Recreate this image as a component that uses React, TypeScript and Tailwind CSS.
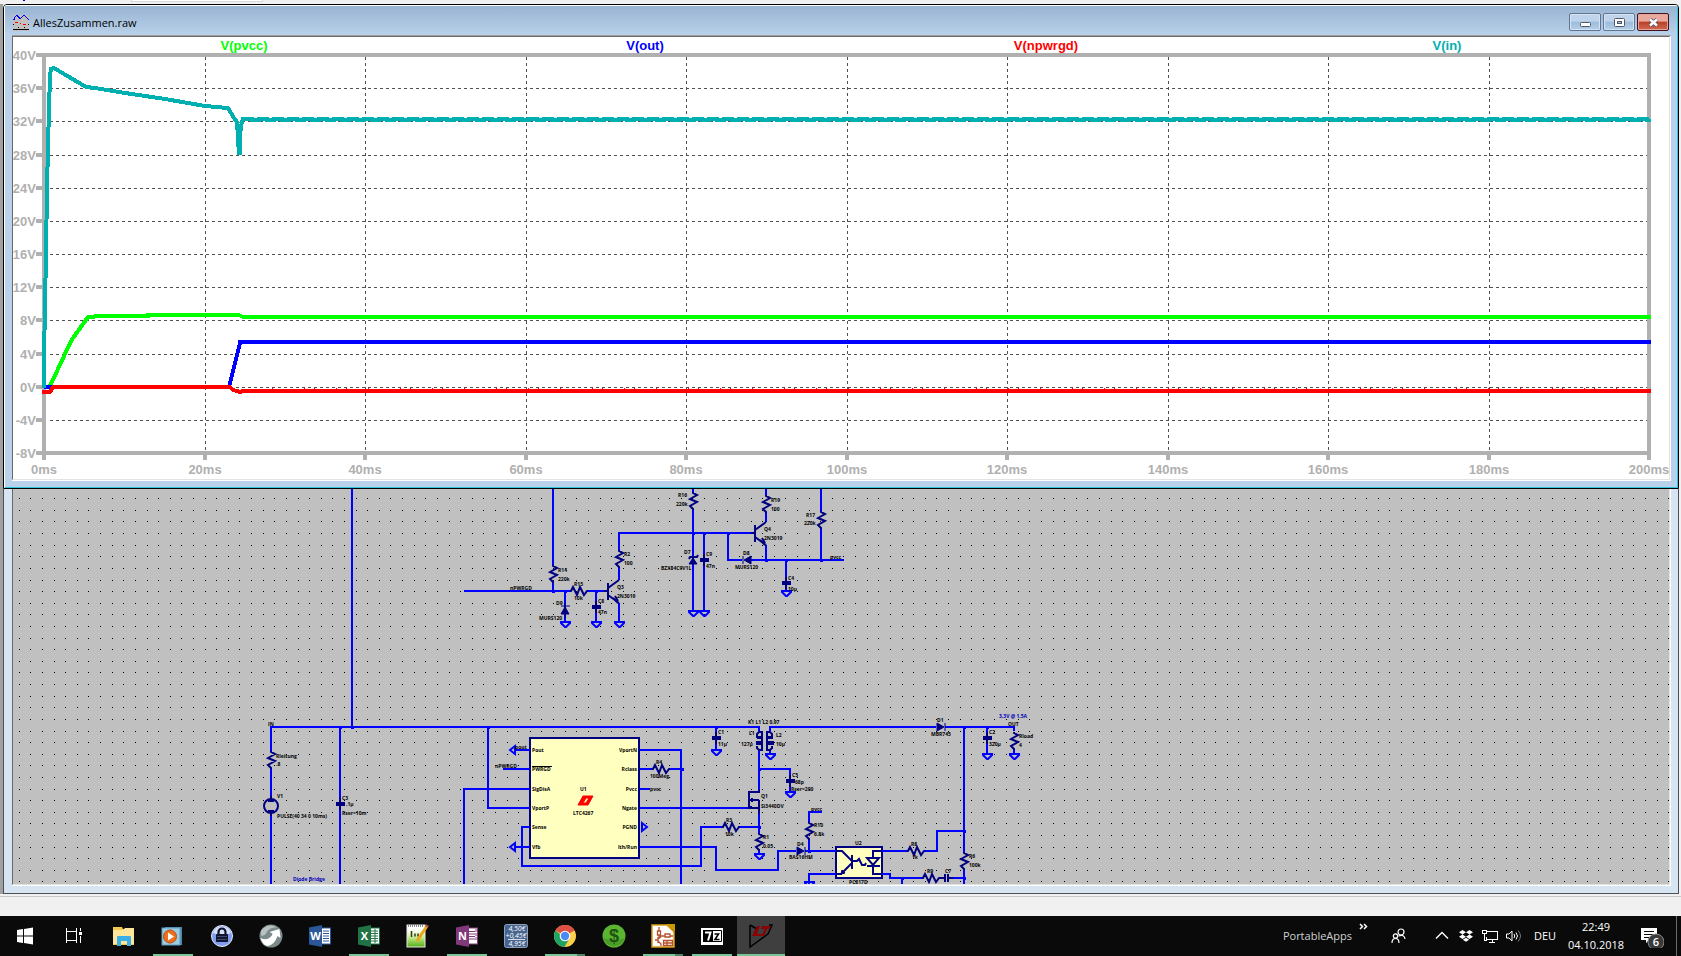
import React from "react";

type Pt = [number, number];

/* ---------- Waveform chart ---------- */

const VOLTS = [40, 36, 32, 28, 24, 20, 16, 12, 8, 4, 0, -4, -8];
const VOLT_Y = [55, 88, 121, 155, 188, 221, 254, 287, 320, 354, 387, 420, 453];
const TIMES = [0, 20, 40, 60, 80, 100, 120, 140, 160, 180, 200];
const TIME_X = [44, 205, 365, 526, 686, 847, 1007, 1168, 1328, 1489, 1649];

const TRACES = [
  { name: "V(pvcc)", x: 244, color: "#00ff00" },
  { name: "V(out)", x: 645, color: "#0000ff" },
  { name: "V(npwrgd)", x: 1046, color: "#ff0000" },
  { name: "V(in)", x: 1447, color: "#00b0b0" },
];

function ripple() {
  let d = "M241 124L243 119";
  for (let x = 244; x < 1649; x += 15) {
    d += `H${Math.min(x + 8, 1649)}V120H${Math.min(x + 15, 1649)}V119`;
  }
  return d;
}

function redTicks() {
  let d = "";
  for (let x = 272; x < 1645; x += 32) {
    d += `M${x} 388h1v2h-1z`;
    if (x % 3 !== 2) d += `M${x + 10} 388h1v2h-1z`;
  }
  return d;
}

function Chart() {
  return (
    <svg
      className="block h-[442px] w-full bg-white"
      viewBox="13 37 1656 442"
      preserveAspectRatio="xMinYMin meet"
      role="img"
      aria-label="Waveforms"
    >
      <g stroke="#505050" strokeWidth="1" strokeDasharray="3 3" shapeRendering="crispEdges">
        {VOLT_Y.slice(1, -1).map((y) => (
          <path key={y} d={`M50 ${y}.5H1647`} />
        ))}
        {TIME_X.slice(1, -1).map((x) => (
          <path key={x} d={`M${x}.5 57V451`} />
        ))}
      </g>
      <g stroke="#b0b0b0" strokeWidth="4" fill="none" shapeRendering="crispEdges">
        <path d="M44 53V460M36 453H1649M44 55H1651M1649 55V460" />
        {VOLT_Y.map((y) => (
          <path key={y} d={`M36 ${y}H44`} />
        ))}
        {TIME_X.map((x) => (
          <path key={x} d={`M${x} 453V460`} />
        ))}
      </g>
      <g fill="#b0b0b0" fontFamily="Liberation Sans, Arial, sans-serif" fontSize="13" fontWeight="700">
        {VOLTS.map((v, i) => (
          <text key={v} x="36" y={VOLT_Y[i] + 5} textAnchor="end">{`${v}V`}</text>
        ))}
        {TIMES.map((t, i) => (
          <text key={t} x={TIME_X[i]} y="474" textAnchor="middle">{`${t}ms`}</text>
        ))}
      </g>
      <g fontFamily="Liberation Sans, Arial, sans-serif" fontSize="13" fontWeight="700" textAnchor="middle">
        {TRACES.map((t) => (
          <text key={t.name} x={t.x} y="50" fill={t.color}>
            {t.name}
          </text>
        ))}
      </g>
      <g fill="none" strokeWidth="4" shapeRendering="crispEdges">
        <path stroke="#00ff00" d="M50 386L65 354L73 338L88 317H94L95 316H148V315H239L243 317H1651" />
        <path stroke="#0000ff" d="M44 387H54M229 387L240 343V342H1651" />
        <path stroke="#ff0000" d="M44 390V392H50L53 387H230L233 390L240 392L243 391H1651" />
        <path
          stroke="#00b0b0"
          d="M44 388V354L45 308L46 250L47 190L48 145L50 75L51 69L54 68L59 71L86 87L95 88L125 93L165 99L205 106L228 108L234 118L237 122L239 155"
        />
        <path stroke="#00b0b0" d="M240 155V135L242 120" />
        <path stroke="#00b0b0" d={ripple()} />
      </g>
      <path d={redTicks()} fill="#ff0000" shapeRendering="crispEdges" />
    </svg>
  );
}

/* ---------- Schematic ---------- */

const GRID = (() => {
  let d = "";
  for (let r = 0; r < 34; r++)
    for (let c = 0; c < 143; c++)
      d += `M${Math.floor(19.3 + c * 11.615)} ${Math.floor(498.7 + r * 11.615)}h1v1h-1z`;
  return d;
})();

const WIRES = [
  "M553 489V565M553 582V592M464 591H570M588 591H607M565 591V622M596 591V622",
  "M619 580V568M619 550V533H754M619 603V622",
  "M693 489V492M693 510V611M704 533V611M728 533V560H742M751 560H844",
  "M766 489V495M766 513V522M766 545V560M821 489V511M821 528V560M786 560V592",
  "M352 489V728M271 751V727H759V731M271 768V797M271 814V884M340 727V884",
  "M488 727V808H530M464 884V789H530M516 750H530M503 769H530",
  "M530 827H522V866H701V827H722M738 827H759M516 847H530",
  "M640 750H681V884M640 769H652M669 769H682M640 789H650M640 808H748",
  "M640 847H716V870H778V851H796M805 851H836M716 727V751",
  "M759 750V791M770 731V727H936M945 727H1014V731M770 750V755M759 769H790V793",
  "M759 808V833M759 850V855M822 812H809V822M809 839V851",
  "M882 851H907M925 851H937V831H964M882 874H890V878H922M902 878V884M953 878H964",
  "M836 874H809V884M964 727V852M964 870V884M987 727V755M1014 750V755",
].join("");

const JUNCTIONS: Pt[] = [
  [352, 727], [340, 727], [488, 727], [553, 591], [565, 591], [596, 591], [693, 533], [704, 533],
  [728, 533], [766, 560], [786, 560], [821, 560], [716, 727], [759, 769], [759, 827], [682, 769],
  [809, 851], [964, 727], [964, 831], [964, 878], [987, 727], [902, 878],
];

const RES_V: Pt[] = [
  [553, 565], [619, 550], [693, 492], [766, 495], [821, 511], [271, 751], [759, 833], [809, 822],
  [964, 852], [1014, 732],
];
const RES_H: Pt[] = [[570, 591], [652, 769], [722, 827], [907, 851], [922, 878]];
const CAPS: Pt[] = [
  [596, 607], [704, 560], [786, 583], [340, 804], [716, 738], [790, 781], [987, 738],
];
const GNDS: Pt[] = [
  [565, 623], [596, 623], [619, 623], [693, 612], [704, 612], [786, 592], [716, 751], [770, 755],
  [790, 793], [759, 855], [987, 755], [1014, 755], [809, 883],
];

const LABELS: [number, number, string][] = [
  [678, 497, "R16"], [676, 506, "220k"], [771, 502, "R19"], [771, 511, "100"], [806, 517, "R17"],
  [804, 525, "220k"], [764, 531, "Q4"], [764, 540, "2N3019"], [684, 554, "D7"],
  [661, 570, "BZX84C9V1L"], [706, 556, "C9"], [706, 568, "47n"], [743, 555, "D8"],
  [735, 569, "MURS120"], [830, 559, "pvcc"], [788, 580, "C4"], [788, 591, "10µ"], [624, 556, "R2"],
  [624, 565, "100"], [558, 572, "R14"], [558, 581, "220k"], [510, 590, "nPWRGD"], [574, 586, "R15"],
  [574, 600, "10k"], [617, 589, "Q3"], [617, 598, "2N3019"], [556, 605, "D9"], [539, 620, "MURS120"],
  [598, 603, "C8"], [598, 614, "47n"], [268, 726, "IN"], [276, 758, "Rleitung"], [276, 766, ".8"],
  [277, 798, "V1"], [277, 818, "PULSE(40 34 0 10ms)"], [342, 800, "C3"], [346, 806, ".1µ"],
  [342, 815, "Rser=10m"], [495, 768, "nPWRGD"], [515, 749, "pout"], [532, 752, "Pout"],
  [532, 771, "PWRGD"], [532, 791, "SigDisA"], [532, 810, "VportP"], [532, 829, "Sense"],
  [532, 849, "Vfb"], [580, 791, "U1"], [573, 815, "LTC4267"], [656, 764, "R4"],
  [650, 778, "100Meg."], [650, 791, "pvcc"], [718, 734, "C1"], [718, 746, "11µ"],
  [726, 822, "R3"], [725, 836, "10k"], [748, 724, "K1 L1 L2 0.97"], [749, 735, "L1"],
  [741, 746, "127µ"], [776, 737, "L2"], [776, 746, "10µ"], [792, 777, "C5"], [795, 784, "68p"],
  [791, 791, "Rser=200"], [761, 798, "Q1"], [761, 808, "Si3440DV"], [763, 839, "R1"],
  [763, 848, "0.05"], [811, 811, "pvcc"], [814, 827, "R10"], [814, 836, "6.8k"], [797, 846, "D4"],
  [789, 859, "BAS16HM"], [855, 845, "U2"], [849, 884, "PC817D"], [911, 846, "R8"], [912, 859, "1k"],
  [937, 722, "D1"], [931, 736, "MBR745"], [989, 734, "C2"], [989, 746, "320µ"], [1008, 726, "OUT"],
  [1019, 738, "Rload"], [1019, 747, "4"], [969, 858, "R6"], [969, 867, "100k"], [927, 873, "R9"],
  [945, 873, "C7"],
];
const LABELS_END: [number, number, string][] = [
  [637, 752, "VportN"], [637, 771, "Rclass"], [637, 791, "Pvcc"], [637, 810, "Ngate"],
  [637, 829, "PGND"], [637, 849, "Ith/Run"],
];

function Schematic() {
  return (
    <svg
      className="block h-full w-full bg-[#c0c0c0]"
      viewBox="13 489 1656 395"
      preserveAspectRatio="xMinYMin slice"
      role="img"
      aria-label="Schematic"
    >
      <path d={GRID} fill="#000" shapeRendering="crispEdges" />
      <rect x="530" y="738" width="109" height="120" fill="#ffffc0" stroke="#000080" strokeWidth="2" />
      <rect x="836" y="847" width="46" height="31" fill="#ffffc0" stroke="#000080" strokeWidth="2" />
      <g fill="none" stroke="#0000ff" strokeWidth="2" shapeRendering="crispEdges">
        <path d={WIRES} />
      </g>
      <g fill="#0000ff" shapeRendering="crispEdges">
        {JUNCTIONS.map(([x, y]) => (
          <rect key={`${x}-${y}`} x={x - 1} y={y - 1} width="3" height="3" />
        ))}
      </g>
      <g fill="none" stroke="#0000ff" strokeWidth="2">
        {GNDS.map(([x, y]) => (
          <path key={`${x}-${y}`} d={`M${x - 4} ${y - 1}h9v1l-4 4h-1l-4 -4z`} />
        ))}
        <path d="M515 746v8l-5 -4zM515 843v8l-5 -4zM642 823v8l5 -4z" />
      </g>
      <g fill="none" stroke="#000080" strokeWidth="2">
        {RES_V.map(([x, y]) => (
          <path key={`${x}-${y}`} d={`M${x} ${y}v1l4 2l-7 4l7 3l-7 4l3 3v1`} />
        ))}
        {RES_H.map(([x, y]) => (
          <path key={`${x}-${y}`} d={`M${x} ${y}h1l2 -4l4 8l3 -8l4 8l3 -4h1`} />
        ))}
        {CAPS.map(([x, y]) => (
          <path key={`${x}-${y}`} d={`M${x} ${y - 6}v12M${x - 4} ${y - 1}h9M${x - 4} ${y + 1}h9`} />
        ))}
        <path d="M940 878h6M945 874v8M948 874v8M948 878h5" />
        {/* transistors */}
        <path d="M607 591h-3M608 583v17M608 588L619 580M608 595L619 603M613 598l5 5M615 596l3 5" />
        <path d="M754 533h-3M755 525v17M755 530L766 522M755 537L766 545M760 540l5 5M762 538l3 5" />
        <path d="M759 790v2h-10v17M749 800h10M748 808h12M759 800v14M752 798v4M751 806v3" />
        {/* voltage source */}
        <circle cx="271" cy="806" r="7" />
        <path d="M271 796v6M268 801h6M268 811h6M271 811v5" />
        {/* transformer */}
        <path d="M762 731v20M767 731v20" />
        <path d="M762 732h-3l-2 2v3h5M757 738h5M762 744h-5v-2h5M762 750h-3l-2 -2v-2M767 732h3l2 2v3h-5M773 738h-6M767 744h6v-2h-6M767 750h3l2 -2v-2" />
        {/* optocoupler */}
        <path d="M836 851h6l10 10M852 855v14M852 863l-9 9M836 874h6M853 861h4l2 -2l3 6l3 0l1 -2M882 851h-9v7M873 866v8h9M867 858h12l-6 7zM867 866h13" />
      </g>
      <g fill="#000080" stroke="#000080">
        <path d="M561 606h9M561 614h8l-4 -7zM565 602v16" />
        <path d="M689 559l1 -2h7l1 -2" fill="none" strokeWidth="2" />
        <path d="M689 564h8l-4 -6z" />
        <path d="M743 556v8M751 556v8l-7 -4z" />
        <path d="M797 847v8l7 -4zM805 847v8" />
        <path d="M937 723v8l7 -4zM945 723v8" />
        <path d="M841 874l1 -4l3 3z" />
      </g>
      <path d="M583 796h10l-5 9h-10zM586 798l-3 5h3l3 -5z" fill="#ff0000" fillRule="evenodd" stroke="#ff0000" />
      <path d="M532 766.5h20" stroke="#000" />
      <g fill="#000" fontFamily="Open Sans, Noto Sans, sans-serif" fontSize="5" fontWeight="700">
        {LABELS.map(([x, y, t]) => (
          <text key={`${x}-${y}`} x={x} y={y}>
            {t}
          </text>
        ))}
        <g textAnchor="end">
          {LABELS_END.map(([x, y, t]) => (
            <text key={t} x={x} y={y}>
              {t}
            </text>
          ))}
        </g>
        <text x="293" y="881" fill="#0000c0">Diode Bridge</text>
        <text x="999" y="718" fill="#0000c0">3.3V @ 1.5A</text>
      </g>
    </svg>
  );
}

/* ---------- Window chrome ---------- */

function TitleIcon() {
  return (
    <svg className="h-4 w-4" viewBox="0 0 16 16" shapeRendering="crispEdges">
      <rect width="16" height="16" fill="#c0c0c0" />
      <path d="M0 4h1v-1l3 -3l3 4l4 -4l4 4h1" fill="none" stroke="#0000ff" />
      <path d="M2 7h3v1h-3zM7 8h1v1h-1zM10 9h3v1h-3zM0 9h1v1h-1z" fill="#ff0000" />
      <path d="M0 14h16v1h-16zM0 9h1v1h-1zM15 9h1v1h-1zM5 12h1v1h-1zM11 12h1v1h-1z" fill="#000" />
    </svg>
  );
}

const captionBtn =
  "flex h-[18px] w-8 items-center justify-center rounded-[2px] border border-[#5f7593] bg-linear-to-b from-[#bfd4ea] from-45% via-[#9dbbdb] via-50% to-[#b5cfe8] ring-1 ring-inset ring-[#d5e4f3]";

function TitleBar() {
  return (
    <header className="flex h-[29px] items-end bg-linear-to-b from-[#99b4d1] to-[#b9d1ea] pr-2 pb-1 pl-2">
      <TitleIcon />
      <h1 className="ml-1 flex-1 font-['Open_Sans','Noto_Sans',sans-serif] text-[11px] leading-4 text-black">
        AllesZusammen.raw
      </h1>
      <div className="flex gap-0.5">
        <button className={captionBtn} aria-label="Minimize">
          <svg className="mt-1 h-[5px] w-[11px]" viewBox="0 0 11 5">
            <rect x="0.5" y="0.5" width="10" height="4" rx="1" fill="#fff" stroke="#535666" />
          </svg>
        </button>
        <button className={captionBtn} aria-label="Maximize">
          <svg className="h-[9px] w-[11px]" viewBox="0 0 11 9">
            <rect x="0.5" y="0.5" width="10" height="8" rx="1" fill="#fff" stroke="#535666" />
            <rect x="3.5" y="3.5" width="4" height="2" fill="#9fc0e0" stroke="#535666" />
          </svg>
        </button>
        <button
          className="flex h-[18px] w-8 items-center justify-center rounded-[2px] border border-[#43101c] bg-linear-to-b from-[#e9a99e] from-45% via-[#b93f24] via-50% to-[#cf6a54] ring-1 ring-[#e4a79c] ring-inset"
          aria-label="Close"
        >
          <svg className="h-[9px] w-[11px]" viewBox="0 0 11 9">
            <path d="M2 1.5L9 7.5M9 1.5L2 7.5" stroke="#535666" strokeWidth="4" />
            <path d="M2 1.5L9 7.5M9 1.5L2 7.5" stroke="#fff" strokeWidth="2.4" />
          </svg>
        </button>
      </div>
    </header>
  );
}

/* ---------- Taskbar ---------- */

const ic = "h-6 w-6 overflow-visible";

const StartIcon = () => (
  <svg className={ic} viewBox="0 0 24 24" fill="#fff">
    <path d="M4 6l6 -1v6.500h-6zM11 5l9 -1.500v8h-9zM4 12.500h6v6.500l-6 -1zM11 12.500h9v8l-9 -1.500z" />
  </svg>
);
const TaskViewIcon = () => (
  <svg className={ic} viewBox="0 0 24 24" fill="none" stroke="#fff" shapeRendering="crispEdges">
    <path d="M4.500 4v3h10v-3M4.500 19v-3h10v3M4.500 7.500v8M14.500 7.500v8M18.500 4v3M18.500 12v7" />
    <path d="M17 8h3v3h-3z" fill="#fff" stroke="none" />
  </svg>
);
const FolderIcon = () => (
  <svg className={ic} viewBox="0 0 24 24">
    <path d="M1 3h9l1 2h11v16h-21z" fill="#f5c84c" />
    <path d="M1 6h10l2 -2h9v16h-21z" fill="#fde69a" />
    <path d="M5 22v-9q0 -1 1 -1h12q1 0 1 1v9h-4v-5h-6v5z" fill="#3aaee8" />
  </svg>
);
const MediaIcon = () => (
  <svg className={ic} viewBox="0 0 24 24">
    <rect x="4" y="3" width="17" height="18" fill="#4d87aa" />
    <rect x="1" y="4" width="18" height="17" fill="#9ccbe4" stroke="#5f9cbd" />
    <circle cx="9" cy="12.500" r="6.500" fill="#ee6f1c" stroke="#b94f12" />
    <path d="M7 8.500v8l6 -4z" fill="#fff" />
  </svg>
);
const LockIcon = () => (
  <svg className={ic} viewBox="0 0 24 24">
    <circle cx="12" cy="12" r="10.500" fill="#7f9cf0" stroke="#e8ecf8" />
    <path d="M3 9a9.500 9.500 0 0 1 18 0q-9 4 -18 0z" fill="#d7e0fb" />
    <path d="M8.500 11V8a3.500 3.500 0 0 1 7 0v3" fill="none" stroke="#10142c" strokeWidth="2.200" />
    <rect x="6" y="10" width="12" height="8" rx="1" fill="#10142c" />
    <path d="M7 12.500h10M7 15.500h10" stroke="#56638f" strokeWidth="0.700" />
  </svg>
);
const ArrowIcon = () => (
  <svg className={ic} viewBox="0 0 24 24">
    <circle cx="12" cy="12" r="11.500" fill="#7c8a8c" />
    <path d="M2 7q4 -6 11 -5.500l5 2q-8 -1 -11 6q-2 3 -5 2z" fill="#b9c1c2" />
    <path d="M1.500 14q6 3 10 -1q2 -2 2 -3.500l-3 -1.500l10 -3l1 9l-3 -2q-3 9 -10 10q-5 -1 -7 -8z" fill="#fff" />
  </svg>
);
function OfficeIcon({ letter, color, sheet }: { letter: string; color: string; sheet: React.ReactNode }) {
  return (
    <svg className={ic} viewBox="0 0 24 24">
      <rect x="12" y="4" width="10.500" height="16" fill="#fff" stroke={color} />
      {sheet}
      <path d="M1 3.500l13 -2.500v22l-13 -2.500z" fill={color} />
      <text x="7.500" y="16" textAnchor="middle" fill="#fff" fontFamily="Open Sans, sans-serif" fontWeight="700" fontSize="11">
        {letter}
      </text>
    </svg>
  );
}
const NotepadIcon = () => (
  <svg className={ic} viewBox="0 0 24 24">
    <defs>
      <linearGradient id="np" x1="0" y1="0" x2="0" y2="1">
        <stop offset="0.2" stopColor="#fff" />
        <stop offset="0.5" stopColor="#d8f29c" />
        <stop offset="1" stopColor="#4fb012" />
      </linearGradient>
    </defs>
    <rect x="1" y="1" width="18" height="22" fill="url(#np)" stroke="#e8e8e8" />
    <path d="M2 2h16" stroke="#888" strokeDasharray="1 1" strokeWidth="2" />
    <path d="M5.500 7v6M9 9.500v3M12 9.500v3M15 9.500v3" stroke="#333" strokeWidth="1.500" />
    <path d="M21 2l-10 15" stroke="#e8a81c" strokeWidth="3" />
    <path d="M21.500 1l-1 2" stroke="#b8524a" strokeWidth="3" />
  </svg>
);
const CalcIcon = () => (
  <svg className={ic} viewBox="0 0 24 24">
    <rect x="0.500" y="0.500" width="23" height="23" rx="2" fill="#48658f" stroke="#8ea2bd" />
    <g fill="#fff" fontFamily="Open Sans, sans-serif" fontStyle="italic" fontSize="7" textAnchor="middle">
      <text x="13" y="7">4,50€</text>
      <text x="12" y="14">+0,45€</text>
      <text x="13" y="22">4,95€</text>
    </g>
    <path d="M4 15.500h17" stroke="#fff" strokeWidth="0.800" />
  </svg>
);
const ChromeIcon = () => (
  <svg className={ic} viewBox="0 0 24 24">
    <circle cx="12" cy="12" r="11" fill="#fdd04b" />
    <path d="M12 12L2.500 6.500A11 11 0 0 1 21.500 6.500z" fill="#dd5144" />
    <path d="M12 6.500h9.500A11 11 0 0 0 12 1z" fill="#dd5144" />
    <path d="M2.500 6.500A11 11 0 0 0 11.500 23l5 -8.500h-4.500z" fill="#1da462" />
    <circle cx="12" cy="12" r="5.300" fill="#fff" />
    <circle cx="12" cy="12" r="4.200" fill="#4a8af4" />
  </svg>
);
const DollarIcon = () => (
  <svg className={ic} viewBox="0 0 24 24">
    <circle cx="12" cy="12" r="11.500" fill="#5cb531" />
    <path d="M1 14a11.500 11.500 0 0 0 22 0q-10 4 -22 0z" fill="#4b9d27" />
    <text x="12" y="18" textAnchor="middle" fontFamily="Liberation Sans, sans-serif" fontWeight="700" fontSize="18" fill="#1d5312">
      $
    </text>
  </svg>
);
const CircuitIcon = () => (
  <svg className={ic} viewBox="0 0 24 24">
    <path d="M1 1h15l7 7v15h-22z" fill="#fff" stroke="#d99e12" strokeWidth="1.500" />
    <path d="M15 0h9v8z" fill="#c99a00" />
    <g stroke="#b5522c" fill="none" strokeWidth="1.300">
      <path d="M8 3v4M6.500 7h3v4h-3zM8 11v3M8 12h6M14 10h5v3h-5zM19 12h3M4 16h3M7 13v6M7 15l3 -2M7 17l3 3v2" />
      <path d="M12.500 16.500h9v5h-9zM12 19h9M16 17v4" />
    </g>
  </svg>
);
const SevenZipIcon = () => (
  <svg className={ic} viewBox="0 0 24 24">
    <rect x="1" y="4" width="22" height="17" fill="#fff" />
    <rect x="3" y="6" width="10" height="12" fill="#000" />
    <path d="M13 6.500h8.500v11h-8.500" fill="none" stroke="#000" />
    <path d="M5 8.500h5.500l-2.500 8" stroke="#fff" strokeWidth="2" fill="none" />
    <path d="M14.500 10h4l-3.500 5.500h4.500" stroke="#000" strokeWidth="1.600" fill="none" />
  </svg>
);
const LtIcon = () => (
  <svg className={ic} viewBox="0 0 24 24">
    <path d="M1 1v22l18 -13M1 1l7 4M19 10l4 -9h-3" fill="none" stroke="#000" strokeWidth="1.500" />
    <path d="M8 2h3l-3 8h5l-2 2h-8z" fill="#8b0000" />
    <path d="M13 2h9l-2 3h-2l-3 7h-3l4 -7h-4z" fill="#8b0000" />
  </svg>
);

type App = { name: string; icon: React.ReactNode; state?: "open" | "multi" | "active" };

const APPS: App[] = [
  { name: "Explorer", icon: <FolderIcon /> },
  { name: "Media Player", icon: <MediaIcon />, state: "open" },
  { name: "KeePass", icon: <LockIcon /> },
  { name: "Seafile", icon: <ArrowIcon /> },
  {
    name: "Word",
    icon: <OfficeIcon letter="W" color="#2b579a" sheet={<path d="M15 7h6M15 9.500h6M15 12h6M15 14.500h6M15 17h6" stroke="#2b579a" />} />,
  },
  {
    name: "Excel",
    state: "open",
    icon: <OfficeIcon letter="X" color="#217346" sheet={<path d="M14 7h7M14 9.500h7M14 12h7M14 14.500h7M14 17h7M18 5v14" stroke="#217346" />} />,
  },
  { name: "Notepad++", icon: <NotepadIcon /> },
  {
    name: "OneNote",
    state: "open",
    icon: <OfficeIcon letter="N" color="#80397b" sheet={<path d="M14 7.500h6M14 10h6M14 12.500h6M14 15h6M21 5v3M21 9v3M21 13v3" stroke="#80397b" />} />,
  },
  { name: "Rechner", icon: <CalcIcon /> },
  { name: "Chrome", icon: <ChromeIcon />, state: "multi" },
  { name: "Finanzen", icon: <DollarIcon /> },
  { name: "Schaltplan", icon: <CircuitIcon />, state: "multi" },
  { name: "7-Zip", icon: <SevenZipIcon />, state: "open" },
  { name: "LTspice", icon: <LtIcon />, state: "active" },
];

function TaskButton({ app }: { app: App }) {
  const active = app.state === "active";
  return (
    <button
      aria-label={app.name}
      className={`relative flex h-10 w-12 items-center justify-center ${active ? "bg-[#3f3f3f]" : ""}`}
    >
      {app.icon}
      {app.state && (
        <span className={`absolute bottom-0 flex h-0.5 ${active ? "inset-x-0" : "inset-x-1"}`}>
          <span className="flex-1 bg-[#76c695]" />
          {app.state === "multi" && <span className="w-2 bg-[#4f8365]" />}
        </span>
      )}
    </button>
  );
}

function Taskbar() {
  return (
    <footer className="flex h-10 items-center bg-[#0a0a0a] font-['Open_Sans','Noto_Sans',sans-serif] text-[11px] leading-4 text-white">
      <div className="flex gap-px pl-px">
        <button className="flex h-10 w-12 items-center justify-center" aria-label="Start">
          <StartIcon />
        </button>
        <button className="flex h-10 w-12 items-center justify-center" aria-label="Task View">
          <TaskViewIcon />
        </button>
      </div>
      <nav className="ml-0.5 flex gap-px">
        {APPS.map((a) => (
          <TaskButton key={a.name} app={a} />
        ))}
      </nav>
      <div className="ml-auto flex items-center">
        <span className="text-[#d0d0d0]">PortableApps</span>
        <button className="mb-5 ml-1.5 h-3 w-3" aria-label="More">
          <svg viewBox="0 0 12 12" className="h-3 w-3" fill="none" stroke="#fff" strokeWidth="1.500">
            <path d="M2 4l2.500 2.500l-2.500 2.500M6 4l2.500 2.500l-2.500 2.500" />
          </svg>
        </button>
        <button className="ml-5 h-4 w-4" aria-label="People">
          <svg viewBox="0 0 16 16" className="h-4 w-4" fill="none" stroke="#fff" strokeWidth="1.200">
            <circle cx="11" cy="4" r="3" />
            <circle cx="5.500" cy="8" r="2.200" />
            <path d="M2 15q0 -4.500 3.500 -4.500t3.500 4.500M8.500 8q6 -2 6.500 3" />
          </svg>
        </button>
        <button className="ml-7 h-4 w-4" aria-label="Show hidden icons">
          <svg viewBox="0 0 16 16" className="h-4 w-4" fill="none" stroke="#fff" strokeWidth="1.400">
            <path d="M2 10.500l6 -6l6 6" />
          </svg>
        </button>
        <button className="ml-2 h-4 w-4" aria-label="Dropbox">
          <svg viewBox="0 0 16 16" className="h-4 w-4" fill="#fff">
            <path d="M4.500 2l3.500 2.200l-3.500 2.200l-3.500 -2.200zM11.500 2l3.500 2.200l-3.500 2.200l-3.500 -2.200zM4.500 6.600l3.500 2.200l-3.500 2.200l-3.500 -2.200zM11.500 6.600l3.500 2.200l-3.500 2.200l-3.500 -2.200zM8 9.800l3.200 2l-3.200 2l-3.200 -2z" />
          </svg>
        </button>
        <button className="ml-2 h-4 w-4" aria-label="Network">
          <svg viewBox="0 0 16 16" className="h-4 w-4" fill="none" stroke="#fff" shapeRendering="crispEdges">
            <path d="M5 3.500h10.500v8h-11v-3M10 12v2M7 14.500h6M0.500 2.500h4v3h-4zM2.500 6v6h2" />
          </svg>
        </button>
        <button className="ml-2 h-4 w-4" aria-label="Volume">
          <svg viewBox="0 0 16 16" className="h-4 w-4" fill="none" stroke="#fff">
            <path d="M0.500 6h2.500l3 -3v10l-3 -3h-2.500z" />
            <path d="M8 6q1.500 2 0 4M10 4.500q3 3.500 0 7" />
            <path d="M12 2.500q5 5.500 0 11" stroke="#777" />
          </svg>
        </button>
        <span className="ml-3 w-6">DEU</span>
        <time className="ml-1.5 flex w-16 flex-col text-center leading-[18px] whitespace-nowrap">
          <span>22:49</span>
          <span>04.10.2018</span>
        </time>
        <button className="relative ml-3 h-6 w-6" aria-label="Notifications">
          <svg viewBox="0 0 24 24" className="h-6 w-6">
            <path d="M1 4h16v12h-8l-3 3v-3h-5z" fill="#fff" />
            <path d="M4 7.500h10M4 10.500h10M4 13.500h5" stroke="#0a0a0a" />
            <circle cx="16" cy="18" r="8" fill="#3a3a3a" stroke="#8a8a8a" />
            <text x="16" y="22" textAnchor="middle" fill="#fff" fontSize="11" fontWeight="600" fontFamily="Open Sans, sans-serif">
              6
            </text>
          </svg>
        </button>
        <div className="ml-3 h-10 w-[5px] border-l border-[#6a6a6a]" />
      </div>
    </footer>
  );
}

/* ---------- Page ---------- */

export default function App() {
  return (
    <div className="flex h-screen flex-col overflow-hidden bg-[#f0f0f0]">
      <div className="flex h-1 shrink-0 items-start">
        <div className="ml-[23px] h-px w-0.5 bg-[#0000c0]" />
        <div className="ml-[106px] h-0.5 w-[132px] border-x border-b border-[#d9d9d9] bg-white" />
      </div>

      <main className="flex min-h-0 flex-1 flex-col border-l-[3px] border-[#a0a0a0] bg-[#f0f0f0] pr-0.5">
        <section className="shrink-0 rounded-t-[4px] border border-black bg-[#b9d1ea]">
          <div className="rounded-t-[3px] border border-t-white border-r-[#2fc4dc] border-b-[#2fc4dc] border-l-white">
            <TitleBar />
            <div className="mr-1.5 mb-1.5 ml-[7px] border-t border-[#a0a0a0]">
              <div className="border-r border-b border-white">
                <div className="border border-t-[#696969] border-r-[#e3e3e3] border-b-[#e3e3e3] border-l-[#696969]">
                  <Chart />
                </div>
              </div>
            </div>
          </div>
        </section>

        <section className="flex min-h-0 flex-1 flex-col border-x border-b border-[#4a4f57] bg-[#d7e4f2] pr-[7px] pb-[7px] pl-2">
          <div className="min-h-0 flex-1 border-r border-b border-white">
            <div className="h-full overflow-hidden border-r border-b border-l border-r-[#e3e3e3] border-b-[#e3e3e3] border-l-[#696969]">
              <Schematic />
            </div>
          </div>
        </section>
      </main>

      <div className="h-[22px] shrink-0 pt-0.5">
        <div className="h-5 border-t border-[#c8c8c8] bg-[#f0f0f0]" />
      </div>
      <div className="shrink-0">
        <Taskbar />
      </div>
    </div>
  );
}
